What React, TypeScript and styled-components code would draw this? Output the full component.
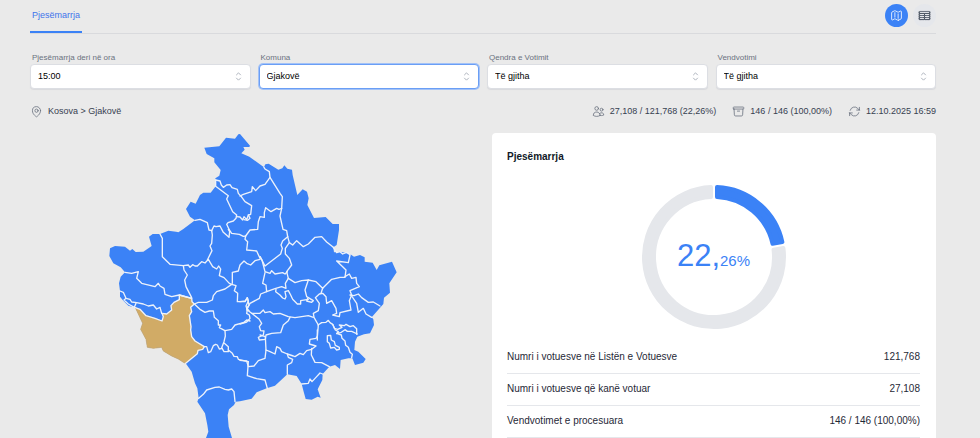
import React, { useState } from 'react';
import styled, { createGlobalStyle } from 'styled-components';
import {
  HiOutlineMap,
  HiOutlineTableCells,
  HiOutlineMapPin,
  HiOutlineUsers,
  HiOutlineArchiveBox,
  HiOutlineArrowPath,
  HiOutlineChevronUpDown,
} from 'react-icons/hi2';

const GlobalStyle = createGlobalStyle`
  *, *::before, *::after { box-sizing: border-box; }
  body {
    margin: 0;
    background: #eaeaea;
    color: #1f2937;
    font-family: "Liberation Sans", Arial, Helvetica, sans-serif;
    font-size: 10px;
    line-height: 16px;
  }
  button, select { font: inherit; }
`;

const Page = styled.main`
  min-height: 100vh;
  padding: 0 44px 0 30px;
`;

const TopBar = styled.header`
  display: flex;
  justify-content: space-between;
  align-items: stretch;
  height: 34px;
  border-bottom: 1px solid #d9dadd;
`;

const Tab = styled.button`
  height: 33px;
  padding: 0 2px 2px;
  border: 0;
  border-bottom: 2px solid #3b82f6;
  background: none;
  color: #3f74ea;
  font-size: 9px;
`;

const ViewSwitch = styled.div`
  display: flex;
  gap: 5px;
  padding-top: 4px;
`;

const RoundButton = styled.button<{ $active?: boolean }>`
  display: grid;
  place-items: center;
  width: 23px;
  height: 23px;
  padding: 0;
  border: 0;
  border-radius: 50%;
  background: ${(p) => (p.$active ? '#3b82f6' : '#e5e7eb')};
  color: ${(p) => (p.$active ? '#ffffff' : '#4b5563')};
  font-size: 13px;
`;

const Filters = styled.form`
  display: grid;
  grid-template-columns: repeat(4, 1fr);
  gap: 8px;
  padding-top: 17px;
`;

const Field = styled.label`
  display: grid;
  color: #6b7280;
  font-size: 8px;
  line-height: 13px;
`;

const FieldName = styled.span`
  padding-left: 2px;
`;

const SelectWrap = styled.span`
  display: grid;
  align-items: center;

  & > * { grid-area: 1 / 1; }

  svg {
    justify-self: end;
    margin-right: 6px;
    color: #9ca3af;
    font-size: 13px;
    pointer-events: none;
  }
`;

const Select = styled.select<{ $current?: boolean }>`
  appearance: none;
  width: 100%;
  height: 25px;
  padding: 0 24px 0 7px;
  border: 1px solid ${(p) => (p.$current ? '#6a9ef5' : '#dcdee3')};
  border-radius: 4px;
  background: #ffffff;
  box-shadow: ${(p) => (p.$current ? '0 0 0 1px #a3c2f7' : '0 1px 1px #d9dadd')};
  color: #000000;
  font-size: 9px;
`;

const InfoBar = styled.div`
  display: flex;
  flex-wrap: wrap;
  justify-content: space-between;
  padding: 14px 0;
  color: #374151;
  font-size: 9px;
`;

const InfoGroup = styled.div`
  display: flex;
  flex-wrap: wrap;
  gap: 0 16px;
`;

const InfoItem = styled.span`
  display: flex;
  align-items: center;
  gap: 5px;

  svg {
    color: #6b7280;
    font-size: 13px;
  }
`;

const Columns = styled.div`
  display: grid;
  grid-template-columns: 1fr 1fr;
  gap: 18px;
`;

const MapPanel = styled.section`
  display: flex;
  justify-content: center;
  align-items: flex-start;

  svg {
    width: 100%;
    max-width: 300px;
  }
`;

const Card = styled.section`
  padding: 16px 16px 16px 15px;
  border-radius: 4px;
  background: #ffffff;
`;

const CardTitle = styled.h2`
  margin: 0;
  font-size: 10px;
  line-height: 16px;
  color: #111827;
`;

const Donut = styled.div`
  display: grid;
  place-items: center;
  padding: 19px 0 11px;

  & > * { grid-area: 1 / 1; }
`;

const Share = styled.div`
  padding-top: 3px;
  color: #3b82f6;
  font-size: 31px;
  line-height: 36px;

  small { font-size: 15px; }
`;

const Stats = styled.table`
  width: 100%;
  border-collapse: collapse;

  th, td {
    height: 32px;
    padding: 0;
    border-bottom: 1px solid #e5e7eb;
    font-weight: 400;
    text-align: left;
  }

  td { text-align: right; }
`;

const BLUE = '#3b82f6';

const OUTLINE =
  '415,28 420,27 450,62 448,66 430,66 434,74 424,85 448,95 492,127 496,118 506,116 535,134 547,130 553,121 562,131 576,134 578,150 592,210 608,193 621,200 626,220 622,240 642,279 677,276 698,297 717,297 717,315 710,360 700,367 702,382 722,380 750,387 762,395 780,390 794,397 794,410 818,413 830,435 838,421 876,410 890,442 868,475 870,503 852,518 850,537 815,577 820,583 822,600 810,625 792,628 772,635 765,650 763,675 775,680 797,702 790,713 765,720 757,700 745,700 722,705 720,732 705,720 688,725 668,747 667,765 653,793 662,818 653,815 635,824 617,822 611,800 605,777 590,753 562,748 525,782 500,790 470,802 455,821 420,829 407,830 402,840 387,853 383,870 386,905 396,939 398,975 318,975 318,939 325,920 322,900 315,865 292,830 296,820 292,790 285,775 275,740 257,715 250,712 235,702 215,693 190,678 185,667 160,670 142,667 138,643 122,613 128,595 106,548 85,542 70,527 60,515 60,498 57,475 62,455 75,442 62,427 40,415 28,393 30,370 45,363 75,365 90,377 97,372 107,381 130,380 155,363 147,335 158,327 180,327 205,317 228,320 235,322 250,312 285,286 270,275 258,252 272,230 287,236 300,210 310,203 332,203 347,184 346,160 358,152 362,135 343,112 343,100 320,87 313,68 358,64 378,38 405,41';

const GJAKOVE_BORDER =
  '106,548 120,553 138,572 165,580 186,588 190,575 186,565 200,567 215,555 213,542 222,532 238,524 238,510 275,520 276,530 283,537 272,547 275,560 268,572 273,605 272,615 275,635 285,648 313,665 308,673 294,676 292,686 257,715';

const GJAKOVE = `${GJAKOVE_BORDER} 250,712 235,702 215,693 190,678 185,667 160,670 142,667 138,643 122,613 128,595`;

const BORDERS: { origin: [number, number]; lines: string[] }[] = [
  {
    origin: [0, 0],
    lines: [
      '347,165 360,168 364,180 370,187 380,180 390,179 396,188 412,193 415,205 424,215',
      '347,165 347,184 385,212 380,222 398,260 410,270 408,280 400,288 384,293 380,298 387,313',
      '420,213 430,208 455,200 457,185 467,197 480,183 495,178 510,157 508,140 495,132 492,127',
      '424,215 435,230 455,242 452,268 445,270 440,284 432,275 428,285 420,276 410,275',
      '445,270 450,280 443,286 432,284',
      '510,157 540,205 547,215 545,250 540,273 549,313 560,317 563,335',
      '285,286 300,283 322,293 327,315 335,317',
    ],
  },
  {
    origin: [315, 225],
    lines: [
      '20,92 27,78 33,80 45,78 55,97 72,112 74,95 70,88',
      '72,88 80,100 103,103 115,109 122,108 135,90 158,88 160,65 165,50 178,52 178,38 182,23 198,35 215,25 222,28 230,25',
      '122,108 120,118 128,125 125,150 155,153 165,175',
      '20,92 22,105 20,130 15,138 21,152 7,180',
    ],
  },
  {
    origin: [0, 315],
    lines: [
      '180,12 187,25 187,80 210,103 250,107 265,105 270,112 278,104 285,108 292,108 305,95 315,99 325,88 338,110 350,117 356,108 362,117 358,137 372,143 388,160 395,163',
      '250,107 252,120 262,135 254,150 258,170 275,203',
      '75,127 95,130 115,125 110,145 125,160 165,170 175,160 180,168 192,175 195,193 215,200 238,195 275,205',
      '60,183 70,187 78,205 90,208 95,216 110,218 130,222 145,228 160,225 170,237 180,232 185,250',
      '78,205 72,210 85,222 103,232 108,220',
      '397,160 397,127 415,123 420,105 432,93 440,100 452,105 465,92 480,88',
      '395,163 408,167 403,182 413,190 412,215 435,215 442,203 447,225 440,235 447,242',
      '395,163 375,177 350,185 340,197 337,210 320,217 295,217 283,222 300,238 315,247 328,243 340,243 343,262 355,272 355,285 362,285 358,293 375,302 395,298 405,285 430,278 440,270 450,273',
      '375,302 376,318 372,335 365,353 372,365 385,365 385,350 373,340',
      '313,350 320,350 325,368 332,365 340,347 347,343 352,345 358,357 367,355',
      '385,360 397,370 402,379 412,380 415,388 445,395',
      '296,505 310,493 320,480 345,472 358,471 375,478 385,480 395,477 402,485 405,515',
    ],
  },
  {
    origin: [420, 315],
    lines: [
      '143,20 128,33 123,45 127,55 122,72 75,108 60,80',
      '143,20 148,38 158,45 170,32 190,50 205,42 225,22 245,20 260,36 280,52',
      '148,38 136,55 136,72 148,85 155,105 140,125 145,145',
      '60,80 66,90 75,125 90,130 95,122 105,132 128,128 135,132 142,125',
      '75,128 68,160 78,165 80,185 105,176 125,170 138,175 136,160 145,145',
      '145,145 165,158 185,152 205,150 228,155 248,175 275,148 300,142 315,142 318,120 308,110 290,93 325,98 330,75',
      '280,52 290,68 300,65 308,72 320,67 330,74',
      '315,140 328,132 335,145 348,142 350,160 358,170 330,182 335,195 328,212 333,240 300,248 298,260 278,255 290,250 288,235 275,212 260,220 258,200 248,190 238,192 226,203 238,220 235,242 220,250 222,262 235,285 232,320 232,330',
      '205,150 195,180 200,200 220,212 215,217 200,213 203,205',
      '248,175 243,190',
      '108,178 107,185 120,195 128,204 135,207 138,200 135,185 145,182 152,195 158,208 172,222 182,222 182,212 205,208',
      '80,185 62,192 58,205 30,220 20,240',
      '0,215 16,213 22,203 25,213 18,228 22,240 35,250 60,250 70,240 75,248 90,245 100,252 120,250 145,260 165,263 185,260 205,257 220,262',
      '0,282 20,276 30,265 28,255 20,250 22,240',
      '35,250 57,267 65,280 58,290 62,302 72,303 70,315 55,322 58,330 76,328 78,315 95,310 122,308 130,285 145,272 150,262',
      '330,195 342,197 355,192 365,203 385,217 400,216 420,228',
      '333,195 350,220 355,247 370,235 378,252 395,262',
    ],
  },
  {
    origin: [600, 495],
    lines: [
      '54,105 65,98 78,97 85,91 90,98 98,103 103,115 113,118 126,112 118,105 133,107 138,103 150,110 160,107 170,116 170,133',
      '98,103 106,120 115,125 110,131 124,127 135,119 142,124 155,124 172,132',
      '110,130 124,135 126,145 135,153 137,166 145,172 150,187 157,193 155,203',
      '82,137 92,136 94,150 103,155 106,166 118,172 118,178 110,180 103,172 92,174 88,160 82,155 82,137',
    ],
  },
  {
    origin: [420, 615],
    lines: [
      '0,91 20,93 25,110 42,108 55,92 75,85 78,60 90,65 105,72 110,50 120,55 125,65 142,72 160,78 165,80 180,70 190,74 200,62 215,58 228,48 208,42 210,28 228,25 232,18 232,0',
      '25,95 22,137 50,146 75,150 82,175',
      '78,60 76,20 60,15',
      '142,72 145,82 158,88 155,98 142,105 142,133',
      '215,55 214,75 225,97 245,98 268,110',
      '185,162 205,160 210,147 216,155 230,140 240,129 248,132',
    ],
  },
];

const MunicipalityMap = () => (
  <svg viewBox="6 24 900 930" role="img" aria-label="Kosova">
    <polygon points={OUTLINE} fill={BLUE} />
    <polygon points={GJAKOVE} fill="#d1ab66" stroke="#d1ab66" strokeWidth={2} />
    <g fill="none" stroke="#edf2fb" strokeWidth={4} strokeLinejoin="round" strokeLinecap="round">
      <polyline points={GJAKOVE_BORDER} />
      {BORDERS.map(({ origin, lines }) => (
        <g key={origin.join()} transform={`translate(${origin.join(' ')})`}>
          {lines.map((points) => (
            <polyline key={points} points={points} />
          ))}
        </g>
      ))}
    </g>
  </svg>
);

const polar = (radius: number, degrees: number) => {
  const a = (degrees * Math.PI) / 180;
  return `${(radius * Math.sin(a)).toFixed(2)} ${(-radius * Math.cos(a)).toFixed(2)}`;
};

// Ring segment between two angles; `inset` is the half gap plus the corner radius.
const segment = (from: number, to: number, inset = 3) => {
  const outer = 70;
  const inner = 60;
  const da = (r: number) => (Math.asin(inset / r) * 180) / Math.PI;
  const large = to - from > 180 ? 1 : 0;
  return [
    `M${polar(outer, from + da(outer))}`,
    `A${outer} ${outer} 0 ${large} 1 ${polar(outer, to - da(outer))}`,
    `L${polar(inner, to - da(inner))}`,
    `A${inner} ${inner} 0 ${large} 0 ${polar(inner, from + da(inner))}Z`,
  ].join('');
};

const SHARE_ANGLE = 0.2226 * 360;

const ring = [
  { color: '#e5e7eb', d: segment(SHARE_ANGLE, 360) },
  { color: BLUE, d: segment(0, SHARE_ANGLE) },
];

const filters = [
  { name: 'Pjesëmarrja deri në ora', options: ['15:00'] },
  { name: 'Komuna', options: ['Gjakovë'], current: true },
  { name: 'Qendra e Votimit', options: ['Të gjitha'] },
  { name: 'Vendvotimi', options: ['Të gjitha'] },
];

const stats = [
  ['Numri i votuesve në Listën e Votuesve', '121,768'],
  ['Numri i votuesve që kanë votuar', '27,108'],
  ['Vendvotimet e procesuara', '146 / 146 (100,00%)'],
];

export default function App() {
  const [view, setView] = useState<'map' | 'table'>('map');

  return (
    <>
      <GlobalStyle />
      <Page>
        <TopBar>
          <Tab type="button">Pjesëmarrja</Tab>
          <ViewSwitch>
            <RoundButton type="button" aria-label="Harta" $active={view === 'map'} onClick={() => setView('map')}>
              <HiOutlineMap />
            </RoundButton>
            <RoundButton type="button" aria-label="Tabela" $active={view === 'table'} onClick={() => setView('table')}>
              <HiOutlineTableCells />
            </RoundButton>
          </ViewSwitch>
        </TopBar>

        <Filters>
          {filters.map((f) => (
            <Field key={f.name}>
              <FieldName>{f.name}</FieldName>
              <SelectWrap>
                <Select $current={f.current}>
                  {f.options.map((o) => (
                    <option key={o}>{o}</option>
                  ))}
                </Select>
                <HiOutlineChevronUpDown />
              </SelectWrap>
            </Field>
          ))}
        </Filters>

        <InfoBar>
          <InfoItem>
            <HiOutlineMapPin />
            Kosova &gt; Gjakovë
          </InfoItem>
          <InfoGroup>
            <InfoItem>
              <HiOutlineUsers />
              27,108 / 121,768 (22,26%)
            </InfoItem>
            <InfoItem>
              <HiOutlineArchiveBox />
              146 / 146 (100,00%)
            </InfoItem>
            <InfoItem>
              <HiOutlineArrowPath />
              12.10.2025 16:59
            </InfoItem>
          </InfoGroup>
        </InfoBar>

        <Columns>
          <MapPanel>
            <MunicipalityMap />
          </MapPanel>
          <Card>
            <CardTitle>Pjesëmarrja</CardTitle>
            <Donut>
              <svg width="146" height="146" viewBox="-73 -73 146 146" aria-hidden="true">
                {ring.map((s) => (
                  <path key={s.color} d={s.d} fill={s.color} stroke={s.color} strokeWidth={4} strokeLinejoin="round" />
                ))}
              </svg>
              <Share>
                22,<small>26%</small>
              </Share>
            </Donut>
            <Stats>
              <tbody>
                {stats.map(([label, value]) => (
                  <tr key={label}>
                    <th scope="row">{label}</th>
                    <td>{value}</td>
                  </tr>
                ))}
              </tbody>
            </Stats>
          </Card>
        </Columns>
      </Page>
    </>
  );
}
